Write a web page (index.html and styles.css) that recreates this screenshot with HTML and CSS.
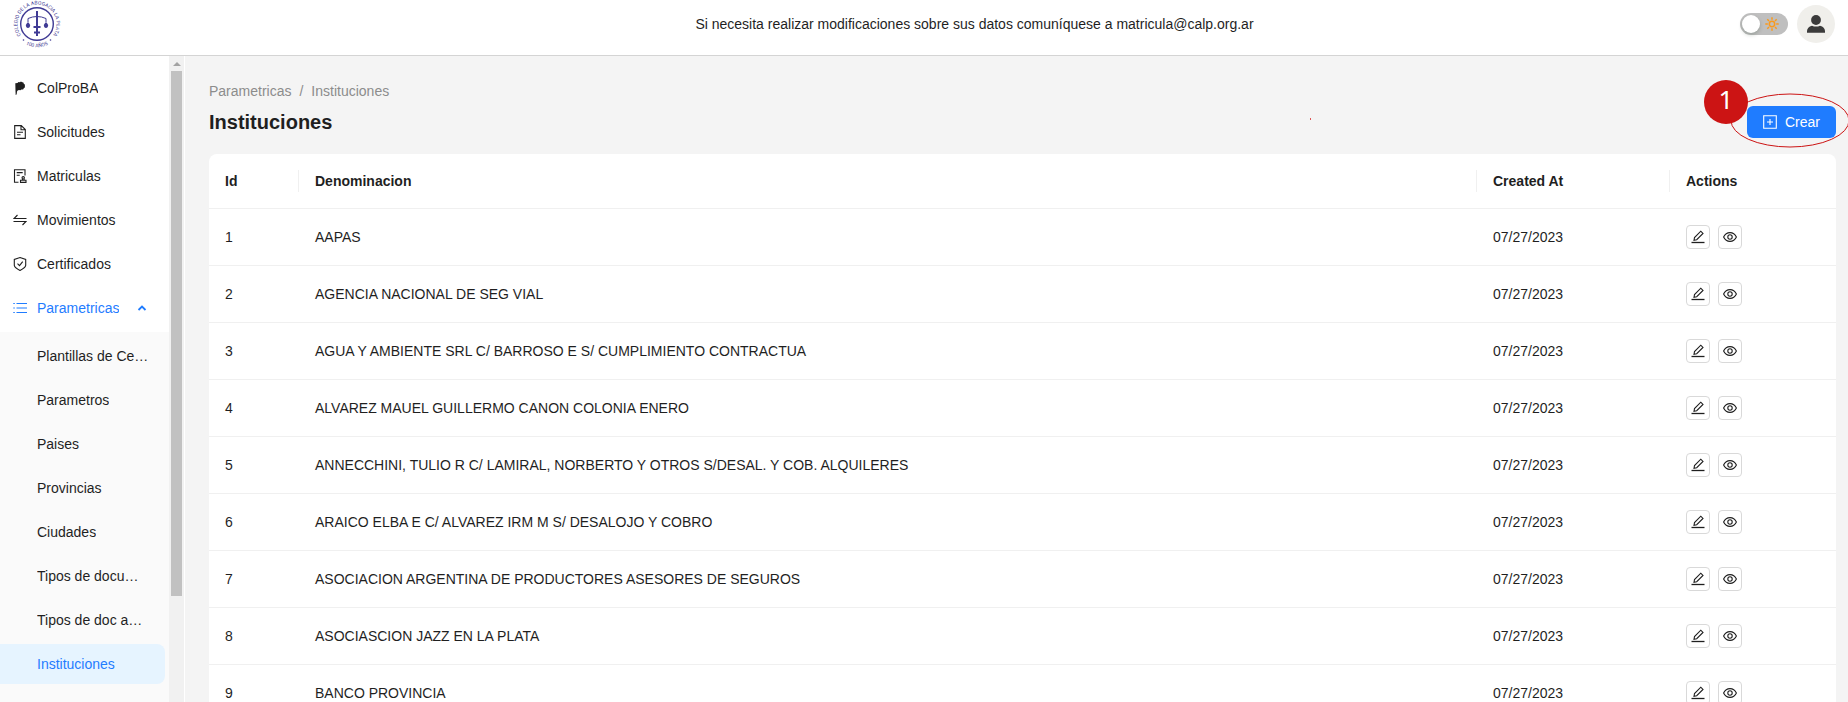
FILE: index.html
```html
<!DOCTYPE html>
<html lang="es">
<head>
<meta charset="utf-8">
<title>Instituciones</title>
<link rel="stylesheet" href="styles.css">
</head>
<body>
<svg class="defs" aria-hidden="true">
  <symbol id="i-edit" viewBox="0 0 14 14"><path d="M.5 12.500h13" stroke-width="1.300"/><path d="M3 10.300l.5-2.800 6.300-6.300 2.200 2.200-6.300 6.300z"/></symbol>
  <symbol id="i-eye" viewBox="0 0 14 14"><path d="M.6 7C2 4 4.200 2.600 7 2.600S12 4 13.400 7C12 10 9.800 11.400 7 11.400S2 10 .6 7z"/><circle cx="7" cy="7" r="2.200"/></symbol>
</svg>
<header class="topbar">
  <a class="brand" href="#" aria-label="Colegio de la Abogacía La Plata">
    <svg class="logo" viewBox="0 0 48 48">
      <defs>
        <path id="arc-top" d="M10.200 37.800A19.500 19.500 0 1 1 37.800 37.800"/>
        <path id="arc-bottom" d="M7.600 40.400A23.200 23.200 0 0 0 40.400 40.400"/>
      </defs>
      <circle cx="24" cy="24" r="16.300" fill="none" stroke="#3f3a94" stroke-width="1.400"/>
      <g fill="none" stroke="#3f3a94">
        <path d="M24 11v25" stroke-width="2"/>
        <path d="M15 18.500q9-4 18 0M15 18.500v4M33 18.500v4" stroke-width="1"/>
        <path d="M20.500 27h7M21 32.500h6" stroke-width="1.800"/>
      </g>
      <path d="M12.800 25q2.200-5 4.400 0-.2 3-2.200 3t-2.200-3zM30.800 25q2.200-5 4.400 0-.2 3-2.200 3t-2.200-3z" fill="#3f3a94"/>
      <circle cx="10.500" cy="40" r=".8" fill="#3f3a94"/>
      <circle cx="37.500" cy="40" r=".8" fill="#3f3a94"/>
      <text class="logo-text"><textPath href="#arc-top" startOffset="50%">COLEGIO DE LA ABOGACIA LA PLATA</textPath></text>
      <text class="logo-text"><textPath href="#arc-bottom" startOffset="50%">100 AÑOS</textPath></text>
    </svg>
  </a>
  <p class="notice">Si necesita realizar modificaciones sobre sus datos comuníquese a matricula@calp.org.ar</p>
  <div class="tools">
    <button class="switch" type="button" role="switch" aria-checked="false" aria-label="Modo oscuro">
      <span class="knob"></span>
      <svg class="sun" viewBox="0 0 14 14"><circle cx="7" cy="7" r="2.700"/><path d="M7 .3v2.500M7 11.200v2.500M.3 7h2.500M11.200 7h2.500M2.300 2.300l1.700 1.700M10 10l1.700 1.700M11.700 2.300L10 4M4 10l-1.700 1.700"/></svg>
    </button>
    <button class="avatar" type="button" aria-label="Perfil">
      <svg viewBox="0 0 18 18"><circle cx="9" cy="5" r="4.900"/><path d="M0 17.800V16q.2-4 5-5.300 4 1.800 8 0 4.800 1.300 5 5.300v1.800z"/></svg>
    </button>
  </div>
</header>
<div class="shell">
  <aside class="sidebar">
    <nav class="menu" aria-label="Principal">
      <ul class="list">
        <li><a class="item" href="#"><svg class="icon solid" viewBox="0 0 14 14"><path d="M2.300 2.200l2.200-.2 1-.9 1.500.2.900-.8 1.500.7 1 .2.400 1.300 1.200 1-.2 1.400.2 1.200-1.200 1-.7 1.200-1.700-.1-1 .8-1.500-.2-1.200.4-.7 1-.3 2.800-1 1-.2-4z"/></svg><span>ColProBA</span></a></li>
        <li><a class="item" href="#"><svg class="icon" viewBox="0 0 14 14"><path d="M1.700.6h6.600l4 4v8.800H1.700zM8 .8v4h4M4 7.200h6M4 9.700h3.500"/></svg><span>Solicitudes</span></a></li>
        <li><a class="item" href="#"><svg class="icon" viewBox="0 0 14 14"><path d="M12 6.500V.7H1.500v12.600h4M3.700 3.600h6M3.700 6.300h3M7.500 13.400v-2.200h5.500v2.200zM9.200 11l.4-1M11.300 11l-.4-1"/><circle cx="10.200" cy="8.800" r="1.200"/></svg><span>Matriculas</span></a></li>
        <li><a class="item" href="#"><svg class="icon" viewBox="0 0 14 14"><path d="M13.500 5.500H1L4.500 2M.5 8.500H13L9.500 12"/></svg><span>Movimientos</span></a></li>
        <li><a class="item" href="#"><svg class="icon" viewBox="0 0 14 14"><path d="M7 .6l5.700 1.800v6Q12.200 11 7 13.400 1.800 11 1.300 8.400v-6zM4.500 6.700l2 2 3.200-4"/></svg><span>Certificados</span></a></li>
        <li><button class="item open" type="button" aria-expanded="true"><svg class="icon" viewBox="0 0 14 14"><path d="M3.500 2.500H14M3.500 7H14M3.500 11.500H14M.3 2.500h1.500M.3 7h1.500M.3 11.500h1.500"/></svg><span>Parametricas</span><svg class="caret" viewBox="0 0 10 10"><path d="M1.500 7L5 3.500 8.500 7"/></svg></button></li>
      </ul>
      <ul class="sublist">
        <li><a class="item" href="#"><span>Plantillas de Certificados</span></a></li>
        <li><a class="item" href="#"><span>Parametros</span></a></li>
        <li><a class="item" href="#"><span>Paises</span></a></li>
        <li><a class="item" href="#"><span>Provincias</span></a></li>
        <li><a class="item" href="#"><span>Ciudades</span></a></li>
        <li><a class="item" href="#"><span>Tipos de documento</span></a></li>
        <li><a class="item" href="#"><span>Tipos de doc adjuntos</span></a></li>
        <li><a class="item active" href="#" aria-current="page"><span>Instituciones</span></a></li>
      </ul>
    </nav>
    <div class="scrollbar" aria-hidden="true"><span class="arrow"></span><span class="thumb"></span></div>
  </aside>
  <main class="content">
    <nav class="crumbs" aria-label="Ruta"><a href="#">Parametricas</a><span>/</span><span>Instituciones</span></nav>
    <div class="heading">
      <h1>Instituciones</h1>
      <span class="speck" aria-hidden="true"></span>
      <div class="create">
        <button class="primary" type="button"><svg class="icon" viewBox="0 0 14 14"><path d="M.7.7h12.600v12.600H.7zM7 4v6M4 7h6"/></svg>Crear</button>
        <svg class="ring" viewBox="0 0 120 56" aria-hidden="true"><ellipse cx="60" cy="27.500" rx="59" ry="26.500"/></svg>
        <span class="step">1</span>
      </div>
    </div>
    <table class="grid">
      <colgroup><col class="c-id"><col><col class="c-date"><col class="c-actions"></colgroup>
      <thead><tr><th>Id</th><th>Denominacion</th><th>Created At</th><th>Actions</th></tr></thead>
      <tbody id="rows"></tbody>
    </table>
  </main>
</div>
<script src="app.js"></script>
</body>
</html>
```
FILE: styles.css
```css
* { box-sizing: border-box; }
body {
  margin: 0;
  height: 100vh;
  display: flex;
  flex-direction: column;
  overflow: hidden;
  background: #f4f4f4;
  color: #1f1f1f;
  font: 14px/22px "Liberation Sans", Arial, sans-serif;
}
a { color: inherit; text-decoration: none; }
button { font: inherit; color: inherit; border: 0; background: none; padding: 0; }
ul { list-style: none; margin: 0; padding: 0; }
.defs { display: none; }

.topbar {
  flex: none;
  display: grid;
  grid-template-columns: 196px 1fr auto;
  align-items: center;
  height: 56px;
  padding: 0 13px 7px;
  background: #fff;
  border-bottom: 1px solid #d4d4d4;
}
.brand, .logo { display: block; }
.logo { width: 48px; height: 48px; overflow: visible; }
.logo-text { font: 5px Roboto, sans-serif; fill: #3f3a94; text-anchor: middle; }
.notice { margin: 0; text-align: center; }
.tools { display: flex; align-items: center; gap: 9px; }
.switch {
  display: flex;
  align-items: center;
  justify-content: space-between;
  width: 48px;
  height: 22px;
  padding: 0 9px 0 2px;
  border-radius: 11px;
  background: #bfbfbf;
}
.knob { width: 18px; height: 18px; border-radius: 50%; background: #fff; box-shadow: 0 2px 4px rgba(0, 35, 11, .2); }
.sun { width: 14px; height: 14px; fill: none; stroke: #fa9a1e; stroke-width: 1.5; }
.avatar {
  display: grid;
  place-items: center;
  width: 38px;
  height: 38px;
  border-radius: 50%;
  background: #f0efeb;
}
.avatar svg { width: 18px; height: 18px; fill: #3b3b3b; }

.shell { flex: 1; min-height: 0; display: flex; }
.sidebar { flex: none; display: flex; width: 185px; background: #fff; border-right: 1px solid #fff; }
.menu { flex: 1; min-width: 0; display: flex; flex-direction: column; overflow: hidden; }
.list { padding: 12px 0 4px; }
.list, .sublist { display: flex; flex-direction: column; gap: 4px; }
.sublist { flex: 1; padding: 4px 0; background: #fafafa; }
.item {
  display: flex;
  align-items: center;
  gap: 10px;
  width: 165px;
  height: 40px;
  padding: 0 16px 0 13px;
  border-radius: 0 8px 8px 0;
}
.sublist .item { padding-left: 37px; }
.item span { overflow: hidden; text-overflow: ellipsis; white-space: nowrap; }
.icon { flex: none; width: 14px; height: 14px; fill: none; stroke: currentColor; stroke-width: 1.1; }
.icon.solid { fill: currentColor; stroke: none; }
.open { color: #1f7cff; }
.caret { width: 10px; height: 10px; margin-left: 8px; fill: none; stroke: currentColor; stroke-width: 1.8; }
.item.active { background: #e6f4ff; color: #1f7cff; }
.scrollbar {
  flex: none;
  display: flex;
  flex-direction: column;
  align-items: center;
  width: 15px;
  padding-top: 6px;
  background: #f1f1f1;
}
.arrow { border: 4px solid transparent; border-top: 0; border-bottom-color: #a3a3a3; margin-bottom: 5px; }
.thumb { width: 11px; height: 82%; background: #c1c1c1; }

.content { flex: 1; min-width: 0; padding: 24px 12px 0 24px; }
.crumbs { display: flex; gap: 8px; color: #8c8c8c; }
.heading { position: relative; display: flex; align-items: center; justify-content: space-between; margin: 4px 0 16px; }
h1 { margin: 0; font-size: 20px; line-height: 28px; }
.speck { position: absolute; right: 525px; top: 12px; width: 1px; height: 2px; background: #dd5555; }
.create { position: relative; }
.primary {
  display: flex;
  align-items: center;
  gap: 8px;
  height: 32px;
  padding: 0 16px;
  border-radius: 6px;
  background: #1f7cff;
  color: #fff;
}
.ring { position: absolute; left: -17px; top: -13px; width: 120px; height: 56px; fill: none; stroke: #cc1414; pointer-events: none; }
.step {
  position: absolute;
  left: -43px;
  top: -26px;
  width: 44px;
  height: 44px;
  border-radius: 50%;
  background: #cc1414;
  color: #fff;
  font: 26px/38px "Noto Sans", "Open Sans", sans-serif;
  text-align: center;
}

.grid { width: 100%; table-layout: fixed; border-collapse: separate; border-spacing: 0; background: #fff; border-radius: 8px 8px 0 0; }
.c-id { width: 90px; }
.c-date { width: 193px; }
.c-actions { width: 166px; }
th, td { padding: 16px; text-align: left; border-bottom: 1px solid #f0f0f0; }
th { position: relative; }
th:not(:last-child)::after {
  content: "";
  position: absolute;
  top: 16px;
  right: 0;
  width: 1px;
  height: 22px;
  background: #f0f0f0;
}
.actions { display: flex; gap: 8px; }
.small {
  display: grid;
  place-items: center;
  width: 24px;
  height: 24px;
  border: 1px solid #d9d9d9;
  border-radius: 4px;
  background: #fff;
}
.small svg { width: 14px; height: 14px; fill: none; stroke: #1f1f1f; stroke-width: 1.1; }
```
FILE: app.js
```js
const names = [
  "AAPAS",
  "AGENCIA NACIONAL DE SEG VIAL",
  "AGUA Y AMBIENTE SRL C/ BARROSO E S/ CUMPLIMIENTO CONTRACTUA",
  "ALVAREZ MAUEL GUILLERMO CANON COLONIA ENERO",
  "ANNECCHINI, TULIO R C/ LAMIRAL, NORBERTO Y OTROS S/DESAL. Y COB. ALQUILERES",
  "ARAICO ELBA E C/ ALVAREZ IRM M S/ DESALOJO Y COBRO",
  "ASOCIACION ARGENTINA DE PRODUCTORES ASESORES DE SEGUROS",
  "ASOCIASCION JAZZ EN LA PLATA",
  "BANCO PROVINCIA"
];
const button = (label, icon) =>
  `<button class="small" type="button" aria-label="${label}"><svg><use href="#${icon}"/></svg></button>`;
document.getElementById("rows").innerHTML = names.map((name, i) =>
  `<tr><td>${i + 1}</td><td>${name}</td><td>07/27/2023</td><td><div class="actions">${button("Editar", "i-edit")}${button("Ver", "i-eye")}</div></td></tr>`
).join("");
```
